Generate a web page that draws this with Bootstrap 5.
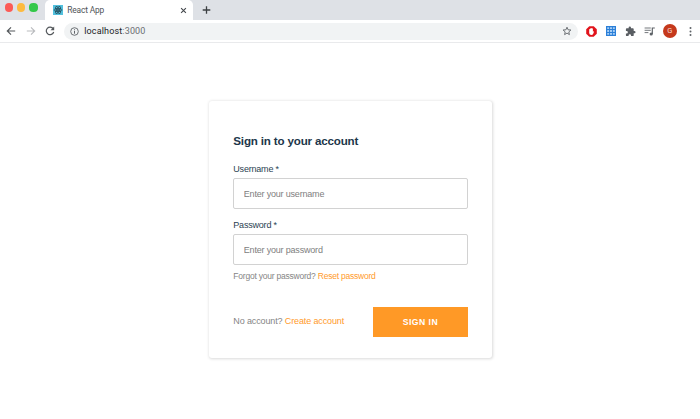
<!DOCTYPE html>
<html lang="en">
<head>
<meta charset="utf-8">
<meta name="viewport" content="width=device-width, initial-scale=1">
<title>React App</title>
<link rel="stylesheet" href="https://cdn.jsdelivr.net/npm/bootstrap@5.3.0/dist/css/bootstrap.min.css">
<style>
body{font-family:"Liberation Sans",Arial,sans-serif;font-size:9px;letter-spacing:-.2px;line-height:12px;color:#2b3f52;background:#fff;height:419px;overflow:hidden}
svg{display:block;flex:none}
.tab-strip{height:20px;background:#dee1e6}
.lights{width:45px;padding:3.4px 0 0 4.6px;gap:4.2px}
.light{width:8.2px;height:8.2px;border-radius:50%}
.light-r{background:#fc5b57}.light-y{background:#fdbb40}.light-g{background:#34c84a}
.browser-tab{width:148px;height:20px;background:#fff;border-radius:5px 5px 0 0;padding:0 6px 0 7.5px;font-family:Roboto,sans-serif;font-size:8.4px;color:#505458}
.tab-name{margin-left:4.7px;letter-spacing:-.14px}
.toolbar{height:23px;border-bottom:1px solid #e9eaec;padding:0 5px 0 6px;color:#5f6368}
.address{height:17px;margin-left:8.5px;padding:0 5.5px 0 6px;border-radius:9px;background:#f1f3f4;font-family:Roboto,sans-serif;font-size:9px;color:#6a6e72;width:514px}
.address b{font-weight:400;color:#202124}
.address-text{margin-left:5.5px;letter-spacing:.15px}
.avatar{width:14px;height:14px;border-radius:50%;background:#c5391c;color:#f7d9d2;font-family:Roboto,sans-serif;font-size:7.5px}
.signin-card{width:283px;height:257px;margin:58px 0 0 209px;padding:32px 24.3px 0;border:0;border-radius:3px;box-shadow:.5px .5px 3px 0 rgba(0,0,0,.15)}
.signin-card h1{font-size:11.6px;letter-spacing:-.17px;line-height:16px;font-weight:700;margin:0 0 14px;color:#20364a}
.field-label{line-height:12px;margin-bottom:3px}
.field{height:31px;border:1px solid #d2d2d2;border-radius:2px;padding:0 9.5px;font-size:9px;letter-spacing:-.19px;box-shadow:none;color:#333}
.field::placeholder{color:#808080;opacity:1}
.password-label{margin-top:10px}
.hint{font-size:8.5px;letter-spacing:-.22px;color:#858585;margin-top:5px}
.hint-lg{font-size:9px;letter-spacing:-.13px;color:#858585;padding-bottom:2px}
.signin-actions{margin-top:24.5px}
.accent{color:#ff9a2b;text-decoration:none}
.btn-signin{width:94.5px;height:30.5px;background:#ff9926;color:#fff;border:0;border-radius:0;font-size:8.6px;font-weight:700;letter-spacing:.5px;line-height:12px;padding:1px 0 0}
.btn-signin:hover{background:#f08c1b;color:#fff}
.icon-nav{margin-left:9.6px}
</style>
<script src="https://cdn.jsdelivr.net/npm/bootstrap@5.3.0/dist/js/bootstrap.bundle.min.js"></script>
</head>
<body>
<header>
  <div class="tab-strip d-flex">
    <div class="lights d-flex"><span class="light light-r"></span><span class="light light-y"></span><span class="light light-g"></span></div>
    <div class="browser-tab d-flex align-items-center">
      <svg width="10" height="10" viewBox="0 0 20 20"><rect width="20" height="20" fill="#53c1de"/><g fill="none" stroke="#20404c" stroke-width="1.3"><ellipse cx="10" cy="10" rx="8.2" ry="3.3"/><ellipse cx="10" cy="10" rx="8.2" ry="3.3" transform="rotate(60 10 10)"/><ellipse cx="10" cy="10" rx="8.2" ry="3.3" transform="rotate(120 10 10)"/></g><circle cx="10" cy="10" r="1.8" fill="#20404c"/></svg>
      <span class="tab-name">React App</span>
      <svg class="ms-auto" width="7" height="7" viewBox="0 0 7 7"><path d="M1.1 1.1l4.8 4.8M5.9 1.1L1.1 5.9" stroke="#45494d" stroke-width="1.1"/></svg>
    </div>
    <svg class="align-self-center ms-2" width="11" height="10" viewBox="0 0 11 10"><path d="M5.5 1.2v7.6M1.7 5h7.6" stroke="#3c4043" stroke-width="1.3"/></svg>
  </div>
  <div class="toolbar d-flex align-items-center">
    <svg width="10" height="10" viewBox="0 0 10 10"><path d="M9.2 5H1.5M5 1.3L1.3 5 5 8.7" fill="none" stroke="#54585c" stroke-width="1.2"/></svg>
    <svg class="icon-nav" width="10" height="10" viewBox="0 0 10 10"><path d="M.8 5h7.7M5 1.3L8.7 5 5 8.7" fill="none" stroke="#b9bbbe" stroke-width="1.1"/></svg>
    <svg class="icon-nav" width="10" height="10" viewBox="0 0 10 10"><path d="M8.2 2.7A3.8 3.8 0 1 0 8.7 6" fill="none" stroke="#54585c" stroke-width="1.2"/><path d="M9.2.6v3.7H5.5z" fill="#54585c"/></svg>
    <div class="address d-flex align-items-center">
      <svg width="9" height="9" viewBox="0 0 9 9"><circle cx="4.5" cy="4.5" r="3.8" fill="none" stroke="#5f6368" stroke-width=".9"/><path d="M4.5 4v2.7M4.5 2.3v1" stroke="#5f6368"/></svg>
      <span class="address-text"><b>localhost</b>:3000</span>
      <svg class="ms-auto" width="10" height="10" viewBox="0 0 10 10"><path d="M5 1.2l1.1 2.6 2.8.2-2.1 1.9.6 2.7L5 7.1 2.6 8.6l.6-2.7L1.1 4l2.8-.2z" fill="none" stroke="#5f6368" stroke-width=".9"/></svg>
    </div>
    <svg width="11" height="11" viewBox="0 0 11 11" style="margin-left:8px"><path d="M3.3.2h4.4l3.1 3.1v4.4l-3.1 3.1H3.3L.2 7.7V3.3z" fill="#e1141c"/><path d="M3.2 5.5V3.3q.4-.6.8 0 0-1.1.8-.9.7-.9 1.2 0 .9-.2.9.8v2.5q.8-.9 1.2-.3L7 8.3q-.6.6-1.5.6-2.3 0-2.3-2z" fill="#fff"/></svg>
    <svg width="10" height="10" viewBox="0 0 10 10" style="margin-left:9.2px"><rect width="10" height="10" fill="#2b7fd8"/><path d="M1.2 1.2h1.9v1.9H1.2zM4 1.2h2v1.9H4zM6.9 1.2h1.9v1.9H6.9zM1.2 4h1.9v2H1.2zM4 4h2v2H4zM6.9 4h1.9v2H6.9zM1.2 6.9h1.9v1.9H1.2zM4 6.9h2v1.9H4zM6.9 6.9h1.9v1.9H6.9z" fill="#a5cdf5"/></svg>
    <svg width="11" height="11" viewBox="0 0 24 24" style="margin-left:8.7px"><path d="M20.5 11H19V7a2 2 0 0 0-2-2h-4V3.5a2.5 2.5 0 0 0-5 0V5H4a2 2 0 0 0-2 2v3.8h1.5a2.7 2.7 0 0 1 0 5.4H2V20a2 2 0 0 0 2 2h3.8v-1.5a2.7 2.7 0 0 1 5.4 0V22H17a2 2 0 0 0 2-2v-4h1.5a2.5 2.5 0 0 0 0-5z" fill="#5a5e63"/></svg>
    <svg width="11" height="11" viewBox="0 0 11 11" style="margin-left:8.6px"><path d="M.6 2h6.2M.6 4.3h6.2M.6 6.6h3.8" stroke="#74787c" stroke-width="1"/><path d="M8.3 8V2h2.5" fill="none" stroke="#5f6368" stroke-width="1.2"/><circle cx="7.2" cy="8" r="1.6" fill="#5f6368"/></svg>
    <span class="avatar d-flex align-items-center justify-content-center flex-shrink-0" style="margin-left:7.5px">G</span>
    <svg class="ms-auto" width="9" height="11" viewBox="0 0 9 11"><g fill="#5f6368"><circle cx="4.5" cy="2" r="1"/><circle cx="4.5" cy="5.5" r="1"/><circle cx="4.5" cy="9" r="1"/></g></svg>
  </div>
</header>
<main>
  <form class="card signin-card">
    <h1>Sign in to your account</h1>
    <label class="field-label" for="username">Username *</label>
    <input class="form-control field" id="username" type="text" placeholder="Enter your username">
    <label class="field-label password-label" for="password">Password *</label>
    <input class="form-control field" id="password" type="password" placeholder="Enter your password">
    <div class="hint">Forgot your password? <a class="accent" href="#">Reset password</a></div>
    <div class="signin-actions d-flex align-items-center justify-content-between">
      <span class="hint-lg">No account? <a class="accent" href="#">Create account</a></span>
      <button class="btn btn-signin" type="button">SIGN IN</button>
    </div>
  </form>
</main>
</body>
</html>
